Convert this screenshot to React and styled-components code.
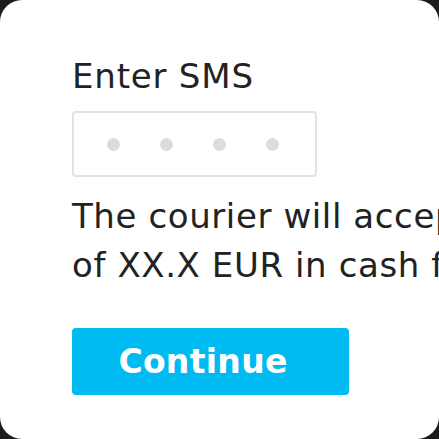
import React from "react";
import styled, { createGlobalStyle } from "styled-components";

const GlobalStyle = createGlobalStyle`
  html, body {
    margin: 0;
    padding: 0;
    background: #1c1c1c;
  }
`;

const App = () => {
  return (
    <>
      <GlobalStyle />
      <Card>
        <Title>Enter SMS</Title>
        <CodeBox>
          {[0, 1, 2, 3].map((i) => (
            <Dot key={i} />
          ))}
        </CodeBox>
        <Message>
          The courier will accept payment
          <br />
          of XX.X EUR in cash from you
        </Message>
        <Button>Continue</Button>
      </Card>
    </>
  );
};

const Card = styled.div`
  width: 439px;
  height: 439px;
  box-sizing: border-box;
  background: #fff;
  border-radius: 22px;
  overflow: hidden;
  padding: 56px 0 0 72px;
  display: flex;
  flex-direction: column;
  align-items: flex-start;
  font-family: "DejaVu Sans", sans-serif;
  color: #222;
`;

const Title = styled.h1`
  margin: 0;
  font-size: 34px;
  line-height: 40px;
  font-weight: normal;
  letter-spacing: 0.8px;
  white-space: nowrap;
`;

const CodeBox = styled.div`
  margin-top: 15px;
  width: 245px;
  height: 66px;
  box-sizing: border-box;
  border: 2px solid #e2e2e2;
  border-radius: 4px;
  display: flex;
  align-items: center;
  padding-left: 33px;
  gap: 40px;
`;

const Dot = styled.span`
  width: 13px;
  height: 13px;
  border-radius: 50%;
  background: #dcdcdc;
`;

const Message = styled.p`
  margin: 15px 0 0;
  font-size: 34px;
  line-height: 49px;
  letter-spacing: 0.6px;
  white-space: nowrap;
`;

const Button = styled.button`
  margin-top: 38px;
  width: 277px;
  height: 67px;
  border: none;
  border-radius: 4px;
  background: #00baf2;
  color: #fff;
  font-family: "DejaVu Sans", sans-serif;
  font-size: 33px;
  font-weight: bold;
  letter-spacing: 0.3px;
  padding: 0 15px 0 0;
  cursor: pointer;
`;

export default App;
